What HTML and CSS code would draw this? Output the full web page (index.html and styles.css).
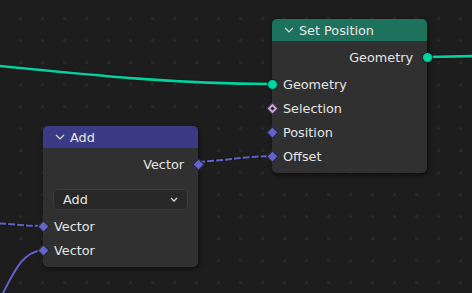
FILE: index.html
```html
<!DOCTYPE html>
<html lang="en">
<head>
    <meta charset="UTF-8">
    <title>Node Editor</title>
    <link rel="stylesheet" href="styles.css">
</head>
<body>

    <div class="editor">
        <svg class="links" width="472" height="293" viewBox="0 0 472 293">
            <!-- geometry links -->
            <path class="wire-shadow" d="M-10,65 C100,76 180,84 272,84"/>
            <path class="wire green" d="M-10,65 C100,76 180,84 272,84"/>
            <path class="wire-shadow" d="M427,57 L480,56"/>
            <path class="wire green" d="M427,57 L480,56"/>
            <!-- vector links -->
            <path class="wire-shadow thin" d="M198,162 C230,160 240,157 272,156"/>
            <path class="wire purple dashed" d="M198,162 C230,160 240,157 272,156"/>
            <path class="wire-shadow thin" d="M-10,223 C15,224 25,226 43,226"/>
            <path class="wire purple dashed" d="M-10,223 C15,224 25,226 43,226"/>
            <path class="wire-shadow thin" d="M2,295 C14,272 22,252 43,250"/>
            <path class="wire purple" d="M2,295 C14,272 22,252 43,250"/>
        </svg>

        <div class="node node-set-position">
            <div class="node-header header-geometry">
                <svg class="chevron" width="10" height="6" viewBox="0 0 10 6"><polyline points="1,1 5,5 9,1"/></svg>
                <span>Set Position</span>
            </div>
            <div class="node-body">
                <div class="row output">
                    <span>Geometry</span>
                    <i class="socket circle out"></i>
                </div>
                <div class="inputs">
                    <div class="row"><i class="socket circle in"></i><span>Geometry</span></div>
                    <div class="row"><i class="socket diamond field in"></i><span>Selection</span></div>
                    <div class="row"><i class="socket diamond in"></i><span>Position</span></div>
                    <div class="row"><i class="socket diamond in"></i><span>Offset</span></div>
                </div>
            </div>
        </div>

        <div class="node node-add">
            <div class="node-header header-vector">
                <svg class="chevron" width="10" height="6" viewBox="0 0 10 6"><polyline points="1,1 5,5 9,1"/></svg>
                <span>Add</span>
            </div>
            <div class="node-body">
                <div class="row output">
                    <span>Vector</span>
                    <i class="socket diamond out"></i>
                </div>
                <div class="dropdown">
                    <span>Add</span>
                    <svg width="8" height="5" viewBox="0 0 8 5"><polyline points="1,1 4,4 7,1"/></svg>
                </div>
                <div class="inputs">
                    <div class="row"><i class="socket diamond in"></i><span>Vector</span></div>
                    <div class="row"><i class="socket diamond in"></i><span>Vector</span></div>
                </div>
            </div>
        </div>
    </div>

</body>
</html>
```

FILE: styles.css
```css
body {
    margin: 0;
    background-color: #1d1d1d;
    font-family: "DejaVu Sans", sans-serif;
    font-size: 12.8px;
    color: #e5e5e5;
}
.editor {
    position: relative;
    width: 472px;
    height: 293px;
    overflow: hidden;
    background-color: #1d1d1d;
    /* grid dots */
    background-image: radial-gradient(circle at 20.5px 18.5px, #272727 1.5px, transparent 1.8px);
    background-size: 22px 22px;
}
.links {
    position: absolute;
    left: 0;
    top: 0;
}
.wire {
    fill: none;
    stroke-width: 2.6;
}
.wire-shadow {
    fill: none;
    stroke: #141414;
    stroke-width: 5;
    opacity: 0.6;
}
.wire-shadow.thin {
    stroke-width: 3.5;
}
.wire.green {
    stroke: #00d3a0;
}
.wire.purple {
    stroke: #6161c8;
    stroke-width: 2;
}
.wire.dashed {
    stroke-dasharray: 7 2;
}
.node {
    position: absolute;
    width: 155px;
    background-color: #303030;
    border-radius: 5px;
    box-shadow: 1px 2px 5px rgba(0, 0, 0, 0.55);
}
.node-set-position {
    left: 272px;
    top: 19px;
}
.node-add {
    left: 43px;
    top: 126px;
}
.node-header {
    height: 22px;
    display: flex;
    align-items: center;
    padding-left: 12px;
    border-radius: 5px 5px 0 0;
    font-size: 12.8px;
    color: #e8e8e8;
}
.header-geometry {
    background-color: #1d725d;
}
.header-vector {
    background-color: #3b3b85;
}
.chevron {
    margin-right: 5px;
    fill: none;
    stroke: #dcdcdc;
    stroke-width: 1.2;
}
.node-body {
    padding: 4px 0 5px;
}
.row {
    position: relative;
    height: 24px;
    display: flex;
    align-items: center;
    padding: 0 11px;
}
.row.output {
    justify-content: flex-end;
    padding-right: 14px;
}
.inputs {
    margin-top: 3px;
}
.node-add .inputs {
    margin-top: 0;
}
.socket {
    position: absolute;
    box-sizing: border-box;
}
.socket.circle {
    border-radius: 50%;
    background-color: #00d6a3;
    border: 1px solid #151515;
    width: 11px;
    height: 11px;
    top: 6.5px;
}
.socket.circle.in {
    left: -5.5px;
}
.socket.circle.out {
    right: -5.5px;
}
.socket.diamond {
    background-color: #6363c7;
    transform: rotate(45deg);
    width: 9px;
    height: 9px;
    top: 7.5px;
    border: 1px solid #1a1a1a;
}
.socket.diamond.in {
    left: -4.5px;
}
.socket.diamond.out {
    right: -4.5px;
}
.socket.field {
    background-color: #c9a6d8;
}
.socket.field::after {
    content: "";
    position: absolute;
    left: 2px;
    top: 2px;
    width: 3px;
    height: 3px;
    background-color: #262626;
}
.dropdown {
    margin: 13px 10px 4px;
    height: 21px;
    box-sizing: border-box;
    display: flex;
    align-items: center;
    justify-content: space-between;
    padding: 0 9px 0 9px;
    background-color: #282828;
    border: 1px solid #3a3a3a;
    border-radius: 5px;
}
.dropdown svg {
    fill: none;
    stroke: #d8d8d8;
    stroke-width: 1.3;
}
```
